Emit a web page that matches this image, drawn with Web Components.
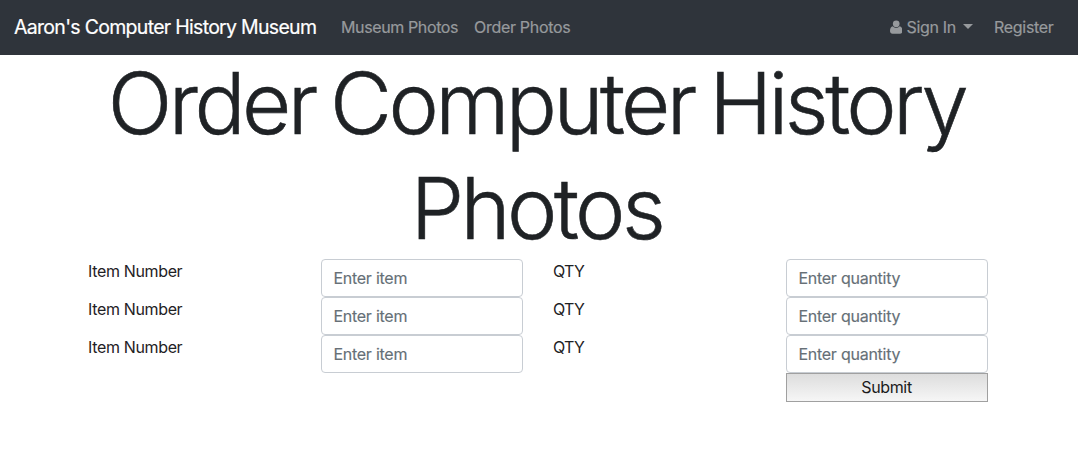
<!DOCTYPE html>
<html lang="en"><head><meta charset="utf-8"><title>Order Photos</title>
<style>body{margin:0;background:#fff;color:#1f2225;font:16px/24px Inter,sans-serif}</style></head><body>
<museum-nav></museum-nav>
<order-page></order-page>
<script>
class MuseumNav extends HTMLElement{constructor(){super();this.attachShadow({mode:'open'}).innerHTML=`
<style>:host{display:flex;box-sizing:border-box;height:55px;padding:0 24px 2px 14px;background:#2f343b;align-items:center;color:#979a9d;white-space:nowrap;-webkit-text-stroke:.2px currentColor}
a{display:block;letter-spacing:-.3px}
.brand{color:#fff;font-size:19.5px;width:303px;margin-right:24px;letter-spacing:-.7px}
.m{width:117px;margin-right:16px;letter-spacing:-.38px}.grow{flex:1}.s{display:flex;align-items:center;width:83px;margin-right:21px}
svg{margin:1px 4px 0 0}.c{border:5px solid transparent;border-top-color:currentColor;border-bottom:0;margin:-1px 0 0 7px}.r{width:60px}</style>
<a class="brand">Aaron's Computer History Museum</a><a class="m">Museum Photos</a><a>Order Photos</a><span class="grow"></span>
<a class="s"><svg width="13" height="14" viewBox="0 0 13 14" fill="currentColor"><circle cx="6.500" cy="3.600" r="3.500"/><path d="M3 6.200C1 6.400 0 8.500 0 11.300C0 13 1 14 2.700 14h7.600C12 14 13 13 13 11.300C13 8.500 12 6.400 10 6.200C8 8.300 5 8.300 3 6.200z"/></svg>Sign In<i class="c"></i></a><a class="r">Register</a>`}}
customElements.define('museum-nav',MuseumNav);
class OrderField extends HTMLElement{connectedCallback(){this.attachShadow({mode:'open'}).innerHTML=`
<style>:host{display:block}input{display:block;box-sizing:border-box;width:100%;height:38px;padding:6px 11.4px;border:1px solid #c8cdd3;border-radius:4px;font:inherit;letter-spacing:-.25px;background:#fff}input::placeholder{color:#667077;opacity:1;-webkit-text-stroke:.15px #667077}</style><input placeholder="${this.getAttribute('hint')}">`}}
customElements.define('order-field',OrderField);
class OrderPage extends HTMLElement{constructor(){super();const row='<span>Item Number</span><order-field hint="Enter item"></order-field><span class="q">QTY</span><order-field hint="Enter quantity"></order-field>';this.attachShadow({mode:'open'}).innerHTML=`
<style>:host{display:flow-root}h1{box-sizing:border-box;margin:-4px auto 0;width:900px;padding-right:5px;text-align:center;font-size:85px;line-height:105px;font-weight:300;letter-spacing:-3.55px;word-spacing:-5px;height:208px;-webkit-text-stroke:.6px currentColor}
.g{display:grid;grid-template-columns:203px 202px 203px 202px;column-gap:30px;width:900px;margin:0 auto 0 88px;letter-spacing:-.35px}.q{letter-spacing:-.7px}
button{grid-column:4;height:29px;border:1px solid #a0a0a0;background:linear-gradient(#ddd,#f6f6f6);font:inherit;letter-spacing:inherit;color:#1b1b1b;padding:0 1px 2px 0}</style>
<h1>Order Computer History Photos</h1><div class="g">${row.repeat(3)}<button>Submit</button></div>`}}
customElements.define('order-page',OrderPage);
</script></body></html>
